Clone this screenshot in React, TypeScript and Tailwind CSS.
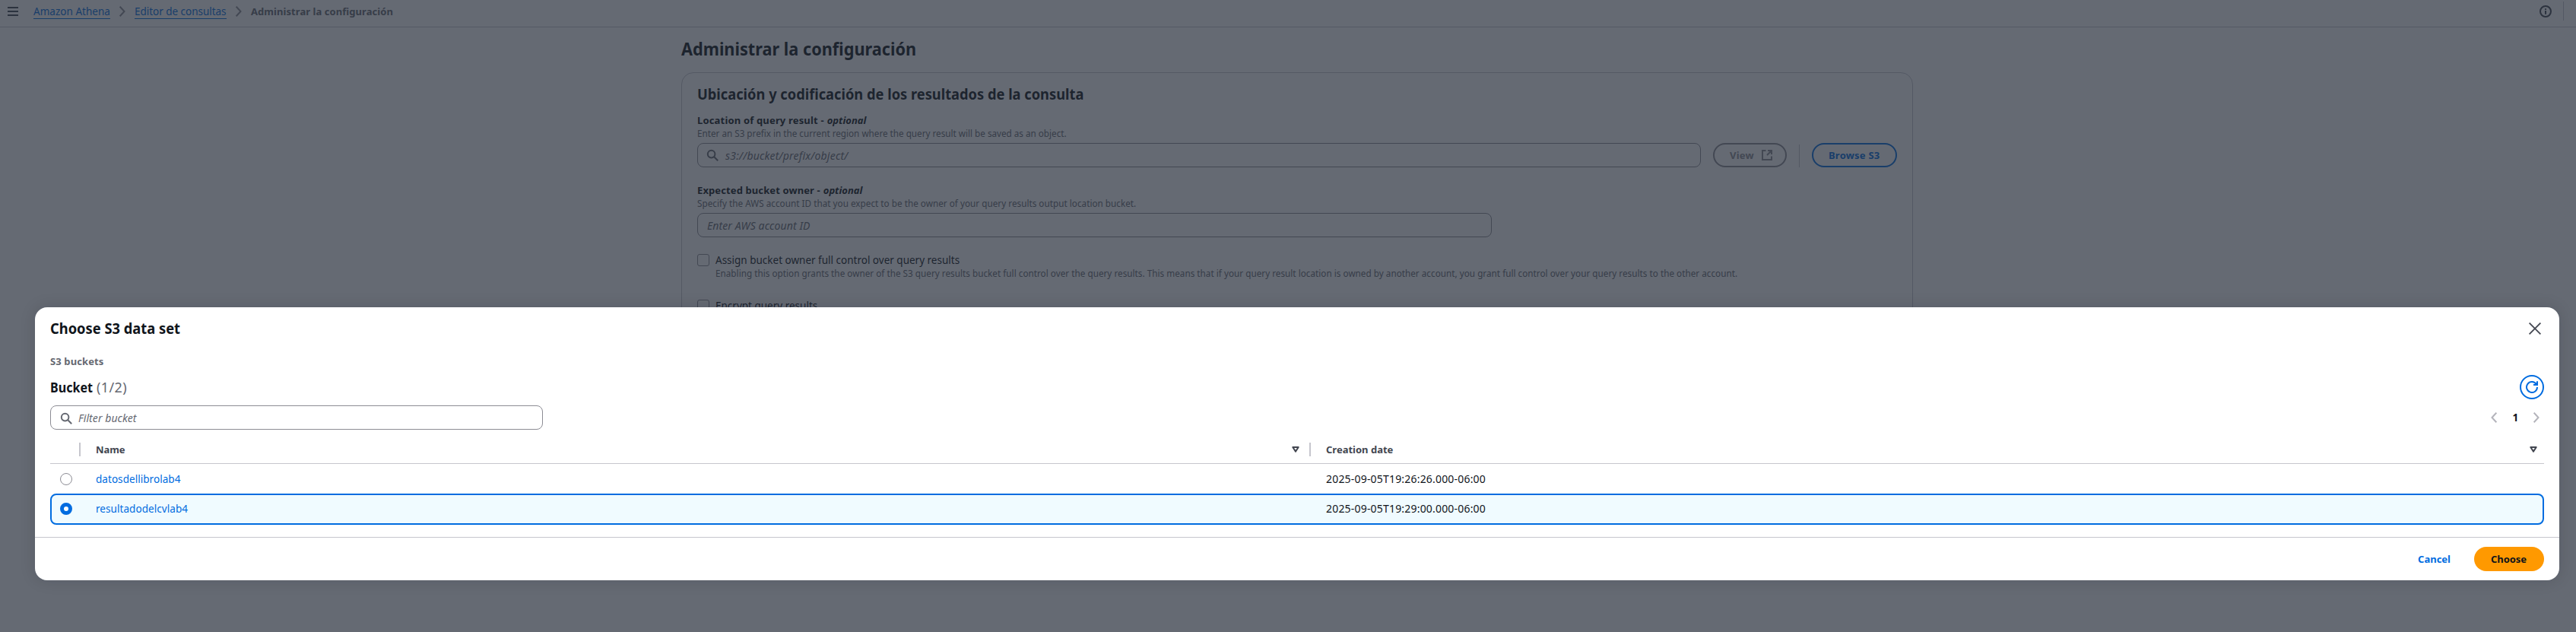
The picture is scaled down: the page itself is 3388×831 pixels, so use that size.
import type { ReactNode } from "react";

function SearchIcon() {
  return (
    <svg width="16" height="16" viewBox="0 0 16 16" fill="none" stroke="#656871" strokeWidth="2">
      <circle cx="6.6" cy="6.6" r="4.8" />
      <path d="M10 10l5.2 5.2" />
    </svg>
  );
}

function Chevron({ color, left = false }: { color: string; left?: boolean }) {
  return (
    <svg width="8" height="14" viewBox="0 0 8 14" fill="none" stroke={color} strokeWidth="2">
      <path d={left ? "M7.3 .7L1.5 7l5.8 6.3" : "M.7 .7L6.5 7 .7 13.3"} />
    </svg>
  );
}

function SortIcon() {
  return (
    <svg width="10" height="8" viewBox="0 0 10 8" fill="none" stroke="#424650" strokeWidth="2" strokeLinejoin="round">
      <path d="M1.3 1h7.4L5 6.6z" />
    </svg>
  );
}

function Crumb({ children, className }: { children: ReactNode; className: string }) {
  return <a className={`h-5 shrink-0 whitespace-nowrap border-b border-[#006ce0] leading-5 text-[#006ce0] ${className}`}>{children}</a>;
}

function FieldLabel({ children, className }: { children: ReactNode; className: string }) {
  return (
    <div className="flex h-5 gap-1 text-[13px] font-bold leading-5 text-[#0f141a]">
      <span className={className}>{children}</span>
      <span className="italic">optional</span>
    </div>
  );
}

function TopBar() {
  return (
    <header className="flex h-9 border-b border-[#c6c6cd] pl-[10px] pr-4">
      <svg className="mt-2 w-[14px]" width="14" height="14" viewBox="0 0 14 14" stroke="#424650" strokeWidth="2">
        <path d="M0 2h14M0 7h14M0 12h14" />
      </svg>
      <nav className="ml-5 flex whitespace-nowrap pt-[5px]">
        <Crumb className="w-[101px] tracking-[0.03px]">Amazon Athena</Crumb>
        <div className="ml-[12px] mt-[3px]"><Chevron color="#8c8c94" /></div>
        <Crumb className="ml-[12px] w-[120.5px] tracking-[-0.03px]">Editor de consultas</Crumb>
        <div className="ml-[12.5px] mt-[3px]"><Chevron color="#8c8c94" /></div>
        <span className="ml-[12px] text-[13px] font-bold leading-5 tracking-[0.063px] text-[#656871]">Administrar la configuración</span>
      </nav>
      <div className="ml-auto flex">
        <svg className="mt-[7px]" width="16" height="16" viewBox="0 0 16 16" fill="none" stroke="#424650" strokeWidth="2">
          <circle cx="8" cy="8" r="7" />
          <path d="M8 4.2v1.8M8 7v4.8" />
        </svg>
        <div className="ml-[15px] mt-[2px] h-[25px] w-px bg-[#c6c6cd]" />
      </div>
    </header>
  );
}

function SettingsPage() {
  return (
    <main className="ml-[896px] w-[1620px] pt-[13px]">
      <h1 className="h-[30px] origin-left scale-x-[0.904] text-[24px] font-bold leading-[30px] text-[#0f141a]">Administrar la configuración</h1>
      <section className="mt-4 h-[400px] rounded-2xl border border-[#c6c6cd] px-5 pt-4">
        <h2 className="h-6 origin-left scale-x-[0.9135] text-[20px] font-bold leading-6 text-[#0f141a]">
          Ubicación y codificación de los resultados de la consulta
        </h2>
        <div className="mt-3">
          <FieldLabel className="tracking-[0.17px]">Location of query result -</FieldLabel>
          <p className="-mt-px text-[11.7px] leading-4 text-[#656871]">
            Enter an S3 prefix in the current region where the query result will be saved as an object.
          </p>
          <div className="mt-[5px] flex h-8">
            <div className="flex w-[1320px] rounded-lg border border-[#8c8c94] pl-[11px] pt-[7px]">
              <SearchIcon />
              <span className="-mt-px ml-[9px] text-[14px] italic leading-5 tracking-[0.216px] text-[#656871]">s3://bucket/prefix/object/</span>
            </div>
            <div className="ml-4 flex w-[97px] rounded-full border-2 border-[#8c8c94] pl-5 pt-[4px] text-[13px] font-bold leading-5 text-[#8c8c94]">
              <span className="w-[33px] tracking-[0.25px]">View</span>
              <svg className="ml-[8px] mt-[2px]" width="16" height="16" viewBox="0 0 16 16" fill="none" stroke="#8c8c94" strokeWidth="2">
                <path d="M6.5 2H2v12h12V9.5M9 2h5v5M13.5 2.5L8 8" />
              </svg>
            </div>
            <div className="ml-4 mt-[2px] h-[30px] w-px bg-[#c6c6cd]" />
            <div className="ml-4 w-[112px] rounded-full border-2 border-[#006ce0] pl-5 pt-[4px] text-[13px] font-bold leading-5 tracking-[0.22px] text-[#006ce0]">Browse S3</div>
          </div>
        </div>
        <div className="mt-5">
          <FieldLabel className="tracking-[0.11px]">Expected bucket owner -</FieldLabel>
          <p className="-mt-px text-[11.7px] leading-4 tracking-[0.03px] text-[#656871]">
            Specify the AWS account ID that you expect to be the owner of your query results output location bucket.
          </p>
          <div className="mt-[5px] h-8 w-[1045px] rounded-lg border border-[#8c8c94] pl-3 pt-[6px] text-[14px] italic leading-5 tracking-[0.102px] text-[#656871]">Enter AWS account ID</div>
        </div>
        <div className="mt-5 flex gap-2">
          <div className="mt-[2px] h-4 w-4 rounded-[3px] border border-[#8c8c94]" />
          <div>
            <p className="h-5 leading-5 text-[#0f141a]">Assign bucket owner full control over query results</p>
            <p className="-mt-px whitespace-nowrap text-[11.7px] leading-4 tracking-[0.03px] text-[#656871]">
              Enabling this option grants the owner of the S3 query results bucket full control over the query results. This means that if your query result location is owned by another account, you grant full control over your query results to the other account.
            </p>
          </div>
        </div>
        <div className="mt-[25px] flex gap-2">
          <div className="mt-[2px] h-4 w-4 rounded-[3px] border border-[#8c8c94]" />
          <p className="h-5 leading-5 text-[#0f141a]">Encrypt query results</p>
        </div>
      </section>
    </main>
  );
}

const columns = "grid-cols-[40px_1618px_1fr]";

function BucketTable() {
  return (
    <div>
      <div className={`grid ${columns} h-[45px] border-b border-[#c6c6cd] pt-[16px] text-[13px] font-bold leading-5 text-[#424650]`}>
        <div className="ml-auto mt-[1px] h-[18px] w-[2px] bg-[#c6c6cd]" />
        <div className="flex pl-5">
          <span className="tracking-[-0.07px]">Name</span>
          <div className="ml-auto mt-[6px]"><SortIcon /></div>
          <div className="ml-[13px] mt-[1px] h-[18px] w-[2px] bg-[#c6c6cd]" />
        </div>
        <div className="flex pl-5 pr-[9px]">
          <span>Creation date</span>
          <div className="ml-auto mt-[6px]"><SortIcon /></div>
        </div>
      </div>
      <div className={`grid ${columns} h-[39px] pt-[10px] leading-5`}>
        <div className="ml-[13px] mt-[2px] h-4 w-4 rounded-full border border-[#8c8c94]" />
        <span className="pl-5 tracking-[0.05px] text-[#006ce0]">datosdellibrolab4</span>
        <span className="pl-5 text-[14px] tracking-[0.19px] text-[#0f141a]">2025-09-05T19:26:26.000-06:00</span>
      </div>
      <div className="h-[41px] rounded-lg border-2 border-[#006ce0] bg-[#f0fbff]">
        <div className={`-ml-[2px] grid ${columns} pt-[8px] leading-5`}>
          <div className="ml-[13px] mt-[2px] h-4 w-4 rounded-full border-[5px] border-[#006ce0] bg-white" />
          <span className="pl-5 tracking-[0.06px] text-[#006ce0]">resultadodelcvlab4</span>
          <span className="pl-5 text-[14px] tracking-[0.19px] text-[#0f141a]">2025-09-05T19:29:00.000-06:00</span>
        </div>
      </div>
    </div>
  );
}

function ChooseDialog() {
  return (
    <div className="absolute left-[46px] top-[404px] h-[359px] w-[3320px] rounded-2xl bg-white shadow-[0_0_20px_1px_rgba(0,7,22,0.12)]">
      <div className="h-[302px] px-5 pt-4">
        <div className="flex h-6 justify-between">
          <h2 className="origin-left scale-x-[0.9155] text-[20px] font-bold leading-6 text-[#0f141a]">Choose S3 data set</h2>
          <svg className="mr-1 mt-1" width="16" height="16" viewBox="0 0 16 16" stroke="#424650" strokeWidth="1.8">
            <path d="M.6 .6l14.8 14.8M15.4 .6L.6 15.4" />
          </svg>
        </div>
        <p className="mt-[21px] h-5 text-[13px] font-bold leading-5 tracking-[0.11px] text-[#656871]">S3 buckets</p>
        <div className="mt-2 flex h-8 justify-between">
          <h3 className="flex pt-1 text-[18px] leading-6">
            <span className="w-[61px] origin-left scale-x-[0.893] font-bold text-[#0f141a]">Bucket</span>
            <span className="tracking-[0.38px] text-[#656871]">(1/2)</span>
          </h3>
          <div className="h-8 w-8 rounded-full border-2 border-[#006ce0] p-[6px]">
            <svg width="16" height="16" viewBox="0 0 16 16" fill="none" stroke="#006ce0" strokeWidth="2">
              <path d="M15 8a7 7 0 1 1-1.2-3.9M10 5h5V.3" />
            </svg>
          </div>
        </div>
        <div className="mt-2 flex h-8">
          <div className="flex w-[648px] rounded-lg border border-[#8c8c94] pl-3 pt-[8px]">
            <SearchIcon />
            <span className="-mt-[2px] ml-2 text-[14px] italic leading-5 tracking-[0.07px] text-[#656871]">Filter bucket</span>
          </div>
          <div className="ml-auto flex pr-[6px] pt-[9px]">
            <Chevron color="#b4b4bb" left />
            <span className="-mt-[3px] ml-[20.5px] w-[27.5px] font-bold leading-5 text-[#0f141a]">1</span>
            <Chevron color="#b4b4bb" />
          </div>
        </div>
        <BucketTable />
      </div>
      <div className="flex h-[57px] justify-end border-t border-[#c6c6cd] pr-5 pt-[12px] text-[13px] font-bold leading-5">
        <span className="pt-[6px] text-[#006ce0]">Cancel</span>
        <div className="ml-[31px] h-8 w-[92px] rounded-full bg-[#ff9900] pl-[22px] pt-[6px] tracking-[-0.05px] text-[#0f141a]">Choose</div>
      </div>
    </div>
  );
}

export default function App() {
  return (
    <div className="relative h-[831px] w-[3388px] overflow-hidden bg-white text-[13.5px] [font-family:'Noto_Sans',sans-serif]">
      <TopBar />
      <SettingsPage />
      <div className="absolute inset-0 bg-[rgba(35,43,55,0.7)]" />
      <ChooseDialog />
    </div>
  );
}
